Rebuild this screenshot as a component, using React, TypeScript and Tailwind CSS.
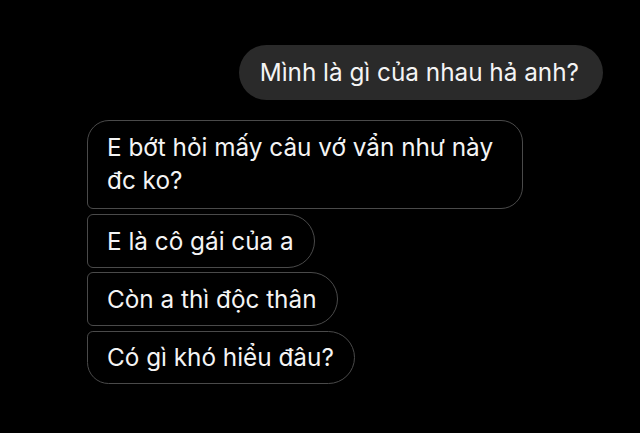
import React from "react";

export default function App() {
  const recv =
    "border-[1.5px] border-[#4a4a4a] bg-black text-[#f4f4f4] pl-[19px] pr-[20px] flex items-center whitespace-nowrap";
  return (
    <div
      className="w-[640px] h-[433px] bg-black flex flex-col pt-[45px] overflow-hidden"
      style={{ fontFamily: "Inter, 'Noto Sans', sans-serif" }}
    >
      <div className="flex justify-end pr-[37px]">
        <div className="h-[55px] rounded-full bg-[#2a2a2a] text-[#f4f4f4] pl-[21px] pr-[24px] flex items-center text-[24.3px] leading-none whitespace-nowrap">
          Mình là gì của nhau hả anh?
        </div>
      </div>
      <div className="mt-[20px] pl-[87px] flex flex-col items-start text-[24.3px]">
        <div className={`${recv} w-[436px] h-[89px] rounded-tl-[22px] rounded-tr-[22px] rounded-br-[22px] rounded-bl-[6px] leading-[33px]`}>
          <div className="pb-[1px]">
            E bớt hỏi mấy câu vớ vẩn như này
            <br />
            đc ko?
          </div>
        </div>
        <div className={`${recv} mt-[5px] h-[54px] rounded-tl-[6px] rounded-bl-[6px] rounded-r-[27px] leading-none`}>
          E là cô gái của a
        </div>
        <div className={`${recv} mt-[4px] h-[54px] rounded-tl-[6px] rounded-bl-[6px] rounded-r-[27px] leading-none`}>
          Còn a thì độc thân
        </div>
        <div className={`${recv} mt-[5px] h-[53px] rounded-tl-[6px] rounded-bl-[22px] rounded-r-[27px] leading-none`}>
          Có gì khó hiểu đâu?
        </div>
      </div>
    </div>
  );
}
